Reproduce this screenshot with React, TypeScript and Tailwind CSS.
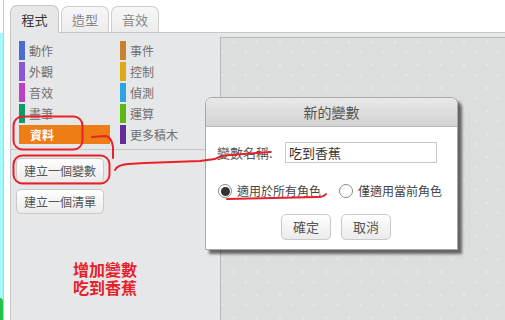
const FONT = { fontFamily: '"Noto Sans CJK TC", "Noto Sans", sans-serif' };

const categories = [
  { label: "動作", color: "bg-[#4a6cd4]" },
  { label: "事件", color: "bg-[#c88330]" },
  { label: "外觀", color: "bg-[#8a55d7]" },
  { label: "控制", color: "bg-[#e1a91a]" },
  { label: "音效", color: "bg-[#bb42c3]" },
  { label: "偵測", color: "bg-[#2ca5e2]" },
  { label: "畫筆", color: "bg-[#0e9a6c]" },
  { label: "運算", color: "bg-[#5cb712]" },
  { label: "資料", color: "bg-[#ee7d16]", active: true },
  { label: "更多積木", color: "bg-[#632d99]" },
];

function Tab({ label, active }: { label: string; active?: boolean }) {
  return (
    <div
      className={
        active
          ? "relative z-10 flex h-[28px] w-[49px] items-center justify-center rounded-t-[7px] border border-b-0 border-[#c6c6c6] bg-[#e6e7e8] text-[13px] text-[#333]"
          : "flex h-[27px] w-[48px] items-center justify-center rounded-t-[7px] border border-b-0 border-[#cfcfcf] bg-gradient-to-b from-[#f7f7f7] to-[#ececec] text-[13px] text-[#888]"
      }
    >
      {label}
    </div>
  );
}

function GrayButton({ label, className }: { label: string; className: string }) {
  return (
    <div
      className={
        "flex items-center justify-center rounded-[5px] border border-[#c9c9c9] bg-gradient-to-b from-[#ffffff] to-[#ebebeb] text-[12px] text-[#555] " +
        className
      }
    >
      {label}
    </div>
  );
}

function Radio({ checked }: { checked?: boolean }) {
  return (
    <span className="flex h-[14px] w-[14px] items-center justify-center rounded-full border border-[#8a8a8a] bg-white">
      {checked ? <span className="h-[9px] w-[9px] rounded-full bg-[#333]" /> : null}
    </span>
  );
}

function Dialog() {
  return (
    <div className="absolute left-[205px] top-[97px] flex h-[153px] w-[253px] flex-col rounded-t-[7px] border border-[#a9a9a9] bg-white shadow-[4px_4px_3px_rgba(0,0,0,0.55)]">
      <div className="flex h-[29px] items-center justify-center rounded-t-[7px] border-b border-[#b9b9b9] bg-gradient-to-b from-[#e8e8e8] to-[#d3d3d3] text-[14px] text-[#555]">
        新的變數
      </div>
      <div className="flex flex-col px-[11px] pt-[15px]">
        <div className="flex items-center">
          <span className="w-[68px] text-[13px] text-[#555]">變數名稱:</span>
          <div className="flex h-[21px] w-[152px] items-center border border-[#c8c8c8] px-[3px] text-[13px] text-[#333]">
            吃到香蕉
          </div>
        </div>
        <div className="mt-[19px] flex items-center text-[12px] text-[#444]">
          <span className="ml-[1px]">
            <Radio checked />
          </span>
          <span className="ml-[5px]">適用於所有角色</span>
          <span className="ml-[18px]">
            <Radio />
          </span>
          <span className="ml-[5px]">僅適用當前角色</span>
        </div>
        <div className="mt-[14px] flex justify-center gap-[10px] pl-[9px]">
          <GrayButton label="確定" className="h-[26px] w-[50px] text-[13px]" />
          <GrayButton label="取消" className="h-[26px] w-[50px] text-[13px]" />
        </div>
      </div>
    </div>
  );
}

function Annotations() {
  return (
    <>
      <svg className="pointer-events-none absolute inset-0" width="505" height="320" viewBox="0 0 505 320">
        <g fill="none" stroke="#e8202a" strokeWidth="2" strokeLinecap="round" strokeLinejoin="round">
          <rect x="13.5" y="116.5" width="69" height="33" rx="9" />
          <path d="M92 137 L106 136 Q112 138 113 147 L113 158" />
          <rect x="13.5" y="155.5" width="96" height="28" rx="9" />
          <path d="M115 170 Q117 165 128 164 L145 163 L200 161 L215 159 Q220 156 230 155 L270 152" />
          <path d="M227 199 L318 197 Q324 197 326 194" />
        </g>
      </svg>
      <div className="absolute left-[73px] top-[260px] flex flex-col text-[16px] font-bold text-[#e8202a]">
        <div className="h-[18px] leading-[18px]">增加變數</div>
        <div className="h-[18px] leading-[18px]">吃到香蕉</div>
      </div>
    </>
  );
}

export default function App() {
  return (
    <div className="relative flex h-[320px] w-[505px] overflow-hidden bg-white" style={FONT}>
      <div className="flex h-full w-[10px]">
        <div className="flex h-full w-[3px] flex-col">
          <div className="h-[33px] bg-white" />
          <div className="flex-1 bg-[#a4fbfb]" />
          <div className="h-[22px] rounded-tr-[3px] bg-[#1fc24a]" />
        </div>
        <div className="h-full w-[1px] bg-[#c8c8c8]" />
        <div className="h-full flex-1 bg-white" />
      </div>

      <div className="flex h-full flex-1 flex-col">
        <div className="-mb-px flex h-[33px] items-end gap-[2px]">
          <Tab label="程式" active />
          <Tab label="造型" />
          <Tab label="音效" />
        </div>

        <div className="flex flex-1 border-l border-t border-[#c6c6c6] bg-[#e6e7e8]">
          <div className="flex w-[209px] flex-col">
            <div className="grid grid-cols-[91px_91px] gap-x-[10px] gap-y-[2px] pl-[8px] pt-[8px]">
              {categories.map((c) =>
                c.active ? (
                  <div
                    key={c.label}
                    className="flex h-[19px] items-center bg-[#ee7d16] pl-[11px] text-[12px] font-bold text-white"
                  >
                    {c.label}
                  </div>
                ) : (
                  <div key={c.label} className="flex h-[19px] items-center text-[12px] text-[#707070]">
                    <span className={"mr-[4px] h-[19px] w-[6px] " + c.color} />
                    {c.label}
                  </div>
                )
              )}
            </div>
            <div className="mt-[5px] h-[1px] w-full bg-[#c9c9c9]" />
            <div className="mt-[8px] flex flex-col gap-[6px] pl-[5px]">
              <GrayButton label="建立一個變數" className="h-[25px] w-[88px]" />
              <GrayButton label="建立一個清單" className="h-[25px] w-[88px]" />
            </div>
          </div>

          <div className="relative mt-[4px] flex-1 overflow-hidden border-l border-t border-[#b8b8b8] bg-[#dcdddd]">
            <svg className="absolute inset-0" width="100%" height="100%">
              <defs>
                <pattern id="plus" width="23" height="23" patternUnits="userSpaceOnUse" x="1.5" y="2">
                  <path d="M11.5 0.5 v3 M10 2 h3 M0 10.5 v3 M-1.5 12 h3 M23 10.5 v3 M21.5 12 h3" stroke="#e8e9e9" strokeWidth="1" />
                </pattern>
              </defs>
              <rect width="100%" height="100%" fill="url(#plus)" />
            </svg>
          </div>
        </div>
      </div>

      <Dialog />
      <Annotations />
    </div>
  );
}
